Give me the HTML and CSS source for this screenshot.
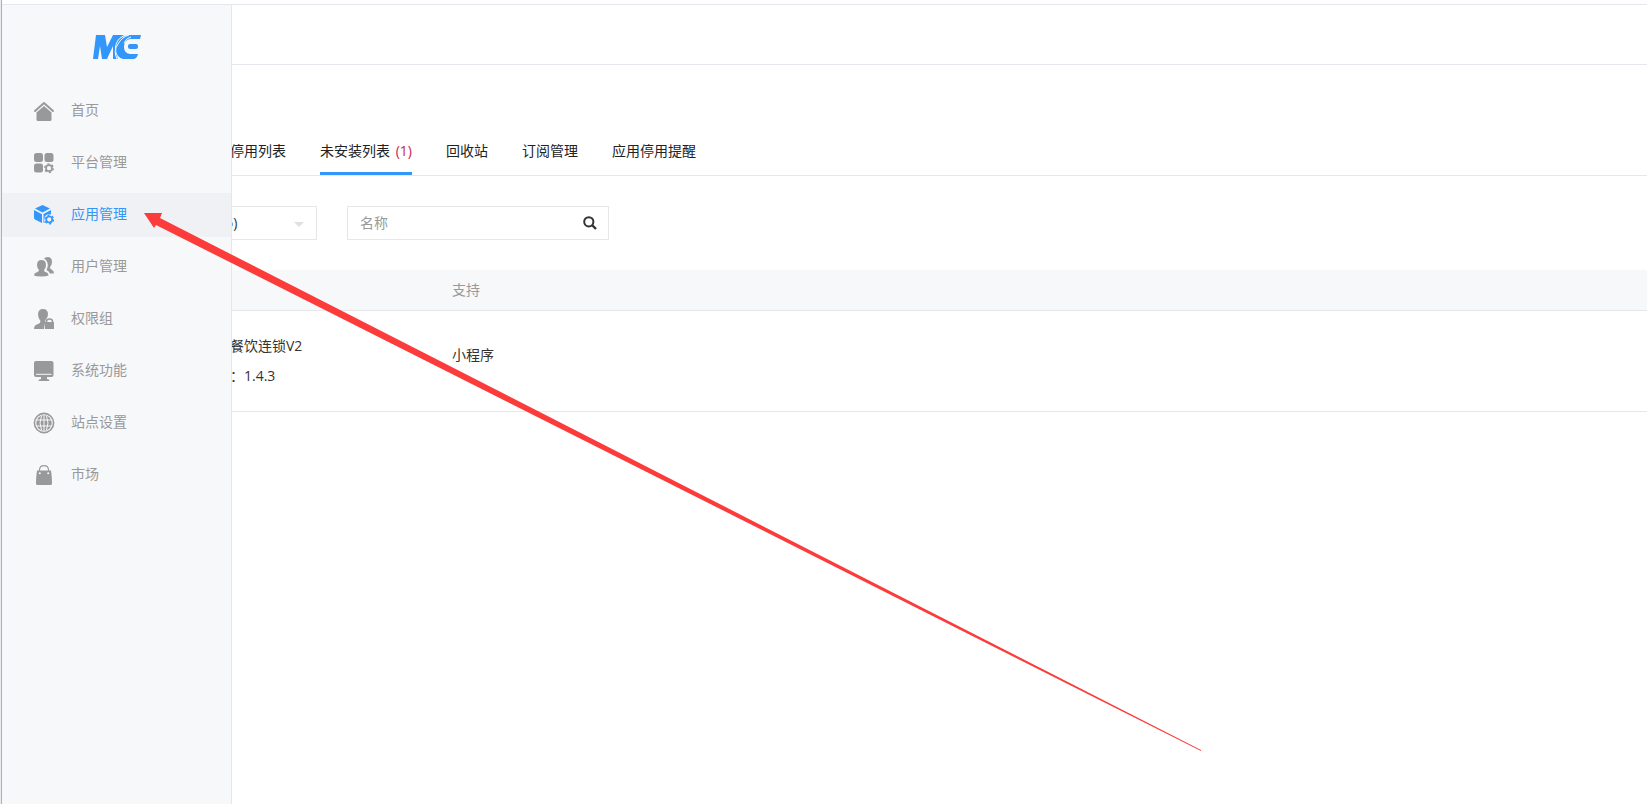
FILE: index.html
```html
<!DOCTYPE html>
<html lang="zh-CN">
<head>
    <meta charset="UTF-8">
    <meta name="viewport" content="width=device-width, initial-scale=1.0">
    <title>应用管理</title>
    <link rel="stylesheet" href="styles.css">
</head>
<body>
    <div class="edge"></div>
    <div class="page">
        <aside class="sidebar">
            <a href="#" class="logo" aria-label="ME">
                <svg width="48" height="24" viewBox="0 0 48 24">
                    <path fill="#3296fa" d="M3 0h9l2 12L20 0h11q-8 4-9 12 0 6 3 12h-5l0-13-6 13H9L7 11 5 24H0z"/>
                    <path fill="#3296fa" d="M48 0l-1 4H37q-6 1-6 8 0 6 6 7h8q-1 5-5 5H30q-7-2-7-10Q23 2 36 0z"/>
                    <path fill="none" stroke="#f7f8fa" stroke-width="1" d="M24 24q-4-8 1-15Q29 2 36 0"/>
                    <path fill="none" stroke="#f7f8fa" stroke-width="1" d="M31 8q2-5 7-6"/>
                    <rect x="35" y="9" width="10" height="5" rx="2" fill="#3296fa"/>
                </svg>
            </a>
            <nav class="menu">
                <a href="#home">
                    <svg class="icon" viewBox="0 0 20 20"><path d="M1 10L10 2l9 8" fill="none" stroke="currentColor" stroke-width="2" stroke-linecap="round" stroke-linejoin="round"/><path d="M10 5l7.500 6.500V18.500q0 1.500-1.500 1.500H4q-1.500 0-1.500-1.500V11.500z"/></svg>
                    <span>首页</span>
                </a>
                <a href="#platform">
                    <svg class="icon" viewBox="0 0 20 20"><rect x="0" y="0" width="9" height="9" rx="2.500"/><rect x="10.500" y="0" width="9" height="9" rx="2.500"/><rect x="0" y="10.500" width="9" height="9" rx="2.500"/><circle cx="15" cy="15.200" r="3" fill="none" stroke="currentColor" stroke-width="1.700"/><circle cx="15" cy="15.200" r="4.300" fill="none" stroke="currentColor" stroke-width="1.300" stroke-dasharray="2.250 2.250"/></svg>
                    <span>平台管理</span>
                </a>
                <a href="#apps" class="active">
                    <svg class="icon" viewBox="0 0 20 20"><path d="M8.500 0l7.500 3.500-7.500 4L1 3.500zM0 5l8 4.200V18L1 14.400q-1-.6-1-1.600zM17 5v4.500q-6-1-7 4.500 0 2 .8 3.400l-1.300.6V9z"/><circle cx="15.200" cy="14.500" r="3" fill="none" stroke="currentColor" stroke-width="1.700"/><circle cx="15.200" cy="14.500" r="4.300" fill="none" stroke="currentColor" stroke-width="1.300" stroke-dasharray="2.250 2.250"/></svg>
                    <span>应用管理</span>
                </a>
                <a href="#users">
                    <svg class="icon" viewBox="0 0 20 20"><path d="M10 1.500q1.200-1.500 3.500-1.500 4.500 0 4.500 5 0 3-2 5 0 2 1.500 2.500 2.500 1 2.500 4h-4q-1-2.500-3.500-3.500 1.500-2.500 1.300-5.500-.3-4-3.800-6z"/><path d="M7.500 3q4.500 0 4.500 5 0 3-2 5 0 1.500 1.500 2 3 .8 3 3.500-2 1-7.200 1T0 18.500Q0 16 3 15.200q2-.7 2-2.200-2-2-2-5 0-5 4.500-5z"/></svg>
                    <span>用户管理</span>
                </a>
                <a href="#roles">
                    <svg class="icon" viewBox="0 0 20 20"><path d="M9 0q5 0 5 5.500 0 3-2.500 5.500l-1.500 9H0q0-4 4-5 2.500-.6 2.500-3Q4 9 4 5.500 4 0 9 0z"/><path d="M11 13h9v7h-9z"/><path d="M12.500 13.500v-1q0-2.500 3-2.500t3 2.500v1" fill="none" stroke="currentColor" stroke-width="1.500"/></svg>
                    <span>权限组</span>
                </a>
                <a href="#system">
                    <svg class="icon" viewBox="0 0 20 20"><path d="M2 0h15.500q2 0 2 2v12q0 2-2 2H2q-2 0-2-2V2q0-2 2-2zM7 16h6v2q2.500.2 2.500 2h-11Q4.500 18.200 7 18z"/><path d="M2 12.800h15.500v1H2z" class="hole"/></svg>
                    <span>系统功能</span>
                </a>
                <a href="#site">
                    <svg class="icon" viewBox="0 0 20 20"><circle cx="10" cy="10" r="9.600" fill="none" stroke="currentColor" stroke-width="1.600"/><circle cx="10" cy="10" r="7.700"/><path d="M10 2v16M2.500 7h15M2.500 13h15M7.500 3q-3 7 0 14M12.500 3q3 7 0 14" fill="none" stroke="#f7f8fa" stroke-width="1"/></svg>
                    <span>站点设置</span>
                </a>
                <a href="#market">
                    <svg class="icon" viewBox="0 0 20 20"><path d="M3 5.500h14q1 6 1 13 0 1.500-1.500 1.500h-13Q2 20 2 18.500q0-7 1-13z"/><path d="M5.500 7V4.500Q6 .7 10 .7t4.500 3.800V7" fill="none" stroke="currentColor" stroke-width="1.200"/><circle cx="5.800" cy="8.200" r="1" class="hole"/><circle cx="14.200" cy="8.200" r="1" class="hole"/></svg>
                    <span>市场</span>
                </a>
            </nav>
        </aside>
        <main class="main">
            <header class="topbar"></header>
            <nav class="tabs">
                <a href="#stopped">停用列表</a>
                <a href="#uninstalled" class="active">未安装列表 <span class="count">(1)</span></a>
                <a href="#recycle">回收站</a>
                <a href="#subscribe">订阅管理</a>
                <a href="#remind">应用停用提醒</a>
            </nav>
            <form class="filters">
                <div class="select-box">
                    <select aria-label="类型">
                        <option>(5)</option>
                    </select>
                </div>
                <div class="search">
                    <input type="text" placeholder="名称" aria-label="名称">
                    <button type="button" aria-label="搜索">
                        <svg width="14" height="14" viewBox="0 0 14 14" fill="none" stroke="#333"><circle cx="5.800" cy="5.800" r="4.600" stroke-width="2"/><path d="M9 9l4 4" stroke-width="2.400"/></svg>
                    </button>
                </div>
            </form>
            <table class="list">
                <thead>
                    <tr>
                        <th class="name"></th>
                        <th>支持</th>
                    </tr>
                </thead>
                <tbody>
                    <tr>
                        <td class="name">
                            <p>餐饮连锁V2</p>
                            <p>：1.4.3</p>
                        </td>
                        <td class="support">小程序</td>
                    </tr>
                </tbody>
            </table>
        </main>
    </div>
    <!-- pointer to the active menu item -->
    <svg class="arrow" width="1058" height="540" viewBox="0 0 1058 540">
        <path fill="#fc3b3b" d="M0 0h18l-2 5L1057 537v1L12 12l-2 3z"/>
    </svg>
</body>
</html>
```

FILE: styles.css
```css
* {
    box-sizing: border-box;
}
body {
    margin: 0;
    display: flex;
    min-height: 100vh;
    background-color: #fff;
    color: #333;
    font-family: "Open Sans", "Noto Sans CJK SC", sans-serif;
    font-size: 14px;
    line-height: 20px;
}
a {
    color: inherit;
    text-decoration: none;
}
p {
    margin: 0;
}
.edge {
    flex: none;
    width: 2px;
    background-color: #e9ebee;
    border-right: 1px solid #b0b0b0;
}
.page {
    flex: 1;
    min-width: 0;
    display: flex;
    margin-top: 4px;
    border-top: 1px solid #e4e7ed;
}

/* sidebar */
.sidebar {
    flex: none;
    width: 230px;
    background-color: #f7f8fa;
    border-right: 1px solid #e4e7ed;
    position: relative;
    z-index: 1;
}
.logo {
    display: flex;
    justify-content: center;
    height: 84px;
    padding-top: 30px;
}
.menu {
    display: flex;
    flex-direction: column;
    gap: 8px;
}
.menu a {
    display: flex;
    align-items: center;
    gap: 17px;
    height: 44px;
    padding-left: 32px;
    color: #999;
}
.menu span {
    padding-bottom: 2px;
}
.menu .active {
    background-color: #f0f1f5;
    color: #3296fa;
}
.icon {
    width: 20px;
    height: 20px;
    fill: currentColor;
    overflow: visible;
}
.hole {
    fill: #f7f8fa;
}

/* content */
.main {
    flex: 1;
    min-width: 0;
}
.topbar {
    height: 60px;
    border-bottom: 1px solid #e4e7ed;
}
.tabs {
    display: flex;
    gap: 34px;
    margin-top: 62px;
    margin-left: -2px;
    height: 49px;
    border-bottom: 1px solid #e7e7eb;
}
.tabs a {
    padding-top: 14px;
    height: 48px;
    color: #222;
}
.tabs .active {
    border-bottom: 3px solid #3296fa;
}
.count {
    margin-left: 2px;
    color: #c7254e;
}
.filters {
    display: flex;
    gap: 30px;
    margin: 30px 0 30px -20px;
}
.select-box {
    position: relative;
}
.select-box::after {
    content: "";
    position: absolute;
    right: 13px;
    top: 16px;
    border: 5px solid transparent;
    border-top-color: #e0e0e0;
    border-bottom: 0;
}
select {
    appearance: none;
    width: 105px;
    height: 34px;
    padding: 0 8px;
    border: 1px solid #e7e7eb;
    border-radius: 0;
    background-color: #fff;
    color: #333;
    font: inherit;
}
.search {
    display: flex;
    width: 262px;
    height: 34px;
    border: 1px solid #e7e7eb;
}
.search input {
    flex: 1;
    min-width: 0;
    padding: 0 12px;
    border: 0;
    outline: 0;
    font: inherit;
}
.search input::placeholder {
    color: #999;
}
.search button {
    display: flex;
    align-items: center;
    padding: 0 11px;
    border: 0;
    background-color: #fff;
}
.list {
    width: 100%;
    table-layout: fixed;
    border-collapse: collapse;
}
.list th,
.list td {
    padding: 0;
    text-align: left;
    border-bottom: 1px solid #e7e7eb;
}
.list th {
    height: 40px;
    background-color: #f7f8fa;
    color: #999;
    font-weight: normal;
}
.list td {
    height: 101px;
    line-height: 30px;
}
.list .name {
    width: 220px;
}
.list .name p {
    margin-left: -2px;
}
.list .support {
    padding-bottom: 12px;
}

.arrow {
    position: absolute;
    left: 144px;
    top: 213px;
    z-index: 2;
    pointer-events: none;
}
```
